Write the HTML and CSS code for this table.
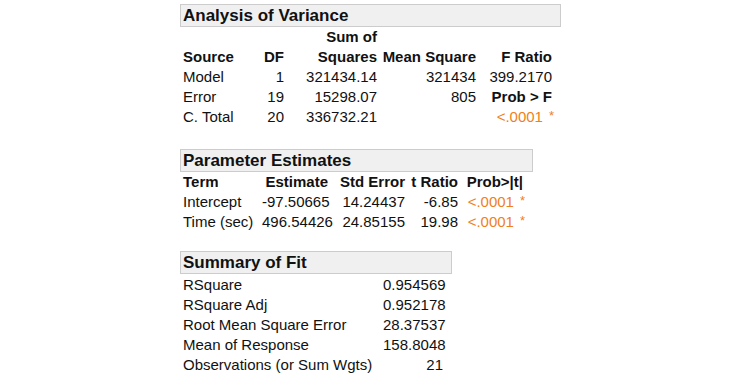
FILE: index.html
```html
<!DOCTYPE html>
<html>
<head>
<meta charset="utf-8">
<link rel="stylesheet" href="styles.css">
</head>
<body>
<section class="report anova">
  <h2 class="title">Analysis of Variance</h2>
  <div class="grid">
    <span class="h"></span><span class="h"></span><span class="h r">Sum of</span><span class="h"></span><span class="h"></span>
    <span class="h">Source</span><span class="h r">DF</span><span class="h r">Squares</span><span class="h r">Mean Square</span><span class="h r">F Ratio</span>
    <span>Model</span><span class="r">1</span><span class="r">321434.14</span><span class="r">321434</span><span class="r">399.2170</span>
    <span>Error</span><span class="r">19</span><span class="r">15298.07</span><span class="r">805</span><span class="r h">Prob &gt; F</span>
    <span>C. Total</span><span class="r">20</span><span class="r">336732.21</span><span></span><span class="r p">&lt;.0001<i class="star">*</i></span>
  </div>
</section>

<section class="report params">
  <h2 class="title">Parameter Estimates</h2>
  <div class="grid">
    <span class="h">Term</span><span class="h r">Estimate</span><span class="h r">Std Error</span><span class="h r">t Ratio</span><span class="h r">Prob&gt;|t|</span>
    <span>Intercept</span><span class="r">-97.50665</span><span class="r">14.24437</span><span class="r">-6.85</span><span class="r p">&lt;.0001<i class="star">*</i></span>
    <span>Time (sec)</span><span class="r">496.54426</span><span class="r">24.85155</span><span class="r">19.98</span><span class="r p">&lt;.0001<i class="star">*</i></span>
  </div>
</section>

<section class="report fit">
  <h2 class="title">Summary of Fit</h2>
  <div class="grid">
    <span>RSquare</span><span class="r">0.954569</span>
    <span>RSquare Adj</span><span class="r">0.952178</span>
    <span>Root Mean Square Error</span><span class="r">28.37537</span>
    <span>Mean of Response</span><span class="r">158.8048</span>
    <span>Observations (or Sum Wgts)</span><span class="r">21</span>
  </div>
</section>
</body>
</html>
```
FILE: styles.css
```css
html, body {
  margin: 0;
  padding: 0;
  background: #ffffff;
}
body {
  padding: 4px 0 0 180px;
  font-family: "Liberation Sans", Arial, sans-serif;
  font-size: 15px;
  color: #111111;
}
.report {
  display: flex;
  flex-direction: column;
  align-items: flex-start;
}
.params {
  margin-top: 22px;
}
.fit {
  margin-top: 19px;
}
.title {
  margin: 0;
  box-sizing: border-box;
  height: 23px;
  padding: 0 0 0 2px;
  font-size: 17px;
  font-weight: bold;
  line-height: 21px;
  background: #f0f0f0;
  border: 1px solid #cccccc;
  color: #111111;
}
.anova .title { width: 381px; }
.params .title { width: 353px; }
.fit .title { width: 272px; }

.grid {
  display: grid;
  grid-auto-rows: 20px;
  margin-left: 3px;
  line-height: 20px;
  white-space: nowrap;
}
.anova .grid { grid-template-columns: 52px 49px 93px 99px 76px; }
.params .grid { grid-template-columns: 79px 66px 77px 53px 65px; }
.fit .grid {
  grid-template-columns: 200px 60px;
  padding-top: 1px;
}

.h { font-weight: bold; }
.r { text-align: right; }
.p { color: #f07f1c; }
.star {
  font-style: normal;
  font-size: 13px;
  line-height: 0;
  margin-left: 6px;
  margin-right: -2px;
  position: relative;
  top: -2px;
}
```
